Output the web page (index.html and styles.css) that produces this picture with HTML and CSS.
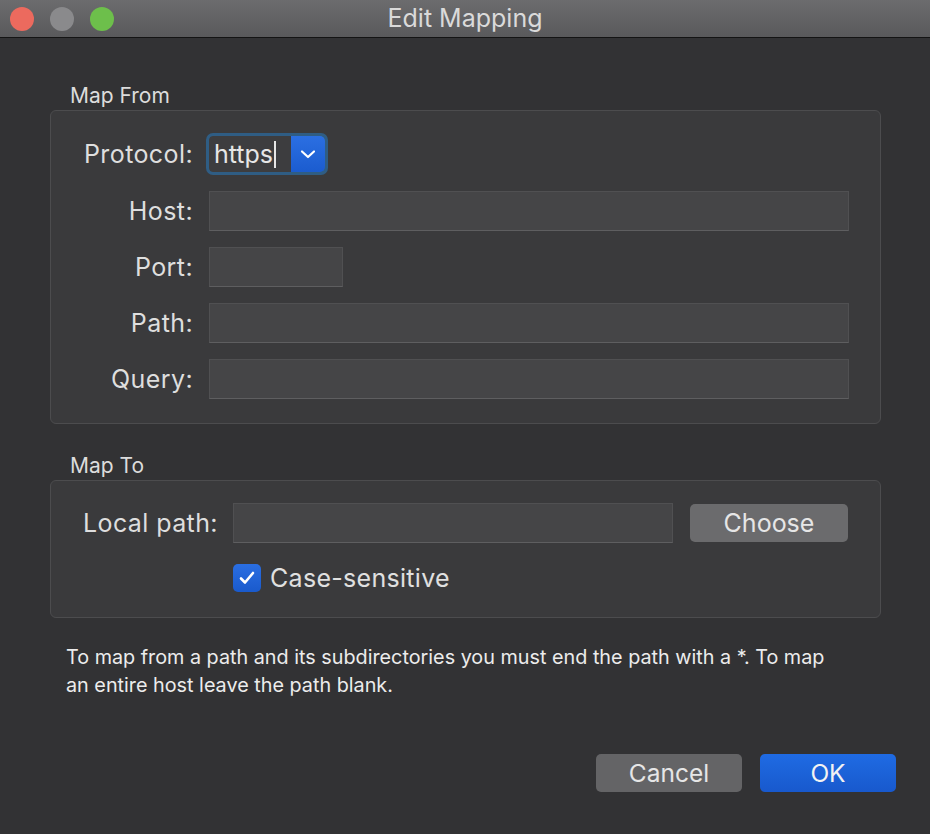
FILE: index.html
```html
<!DOCTYPE html>
<html>
<head>
<meta charset="utf-8">
<link rel="stylesheet" href="styles.css">
</head>
<body>
<div class="window">
  <div class="titlebar">
    <div class="lights">
      <span class="light red"></span>
      <span class="light gray"></span>
      <span class="light green"></span>
    </div>
    <div class="title">Edit Mapping</div>
  </div>
  <div class="content">
    <div class="group-label">Map From</div>
    <div class="group from">
      <div class="row">
        <label class="lbl">Protocol:</label>
        <div class="combo">
          <div class="combo-field">https<span class="caret"></span></div>
          <div class="combo-btn">
            <svg width="16" height="10" viewBox="0 0 16 10"><path d="M2 2.5 L8 8 L14 2.5" fill="none" stroke="#fff" stroke-width="2.2" stroke-linecap="round" stroke-linejoin="round"/></svg>
          </div>
        </div>
      </div>
      <div class="row">
        <label class="lbl">Host:</label>
        <div class="field wide"></div>
      </div>
      <div class="row">
        <label class="lbl">Port:</label>
        <div class="field port"></div>
      </div>
      <div class="row">
        <label class="lbl">Path:</label>
        <div class="field wide"></div>
      </div>
      <div class="row">
        <label class="lbl">Query:</label>
        <div class="field wide"></div>
      </div>
    </div>

    <div class="group-label to-label">Map To</div>
    <div class="group to">
      <div class="row local">
        <label class="lbl2">Local path:</label>
        <div class="field local-field"></div>
        <button class="btn choose">Choose</button>
      </div>
      <div class="check-row">
        <span class="checkbox">
          <svg width="18" height="16" viewBox="0 0 18 16"><path d="M3 8.5 L7 12.5 L15 3" fill="none" stroke="#fff" stroke-width="2.6" stroke-linecap="round" stroke-linejoin="round"/></svg>
        </span>
        <span class="check-text">Case-sensitive</span>
      </div>
    </div>

    <p class="note">To map from a path and its subdirectories you must end the path with a *. To map an entire host leave the path blank.</p>

    <div class="actions">
      <button class="btn cancel">Cancel</button>
      <button class="btn ok">OK</button>
    </div>
  </div>
</div>
</body>
</html>
```
FILE: styles.css
```css
html, body {
  margin: 0;
  padding: 0;
}
body {
  width: 930px;
  height: 834px;
  background: #323234;
  font-family: Inter, "Liberation Sans", Arial, sans-serif;
  color: #dedede;
  overflow: hidden;
}
.window {
  width: 930px;
  height: 834px;
}
.titlebar {
  height: 37px;
  background: linear-gradient(#6c6c6e, #59595b);
  border-bottom: 1px solid #141414;
  display: flex;
  align-items: center;
  position: relative;
}
.lights {
  display: flex;
  gap: 16px;
  padding-left: 10px;
}
.light {
  width: 24px;
  height: 24px;
  border-radius: 50%;
  display: block;
}
.light.red { background: #ec6a5e; }
.light.gray { background: #8a8a8c; }
.light.green { background: #6dbf4b; }
.title {
  position: absolute;
  left: 0;
  right: 0;
  text-align: center;
  font-size: 25px;
  line-height: 30px;
  color: #dadada;
  top: 3px;
}
.content {
  padding: 0 49px 0 50px;
}
.group-label {
  font-size: 21px;
  line-height: 24px;
  padding-left: 20px;
  padding-top: 46px;
  height: 26px;
  color: #dcdcdc;
}
.to-label {
  padding-top: 30px;
}
.group {
  background: #3a3a3c;
  border: 1px solid #4c4c4e;
  border-radius: 6px;
  box-sizing: border-box;
}
.group.from {
  height: 314px;
  padding: 22px 0 0 0;
  display: flex;
  flex-direction: column;
  gap: 16px;
}
.row {
  display: flex;
  align-items: center;
  height: 40px;
}
.group.from .row:first-child {
  height: 42px;
}
.lbl {
  width: 158px;
  text-align: right;
  font-size: 25px;
  letter-spacing: 0.4px;
  padding-right: 16px;
  box-sizing: border-box;
  color: #dedede;
}
.field {
  height: 40px;
  box-sizing: border-box;
  background: #454547;
  border: 1px solid #505052;
  border-bottom: 1px solid #5e5e60;
}
.field.wide {
  width: 640px;
}
.field.port {
  width: 134px;
}
.combo {
  margin-left: -3px;
  height: 42px;
  width: 122px;
  box-sizing: border-box;
  border: 3px solid #2f5d84;
  border-radius: 7px;
  display: flex;
  overflow: hidden;
  background: #2f5d84;
}
.combo-field {
  width: 82px;
  background: #3d3d3f;
  border-radius: 4px 0 0 4px;
  font-size: 25px;
  line-height: 36px;
  padding-left: 5px;
  box-sizing: border-box;
  color: #e6e6e6;
  display: flex;
  align-items: center;
}
.caret {
  display: inline-block;
  width: 1.5px;
  height: 27px;
  background: #e6e6e6;
  margin-left: 1px;
}
.combo-btn {
  flex: 1;
  background: linear-gradient(#2b6fe2, #1b5ccf);
  border-radius: 0 5px 5px 0;
  display: flex;
  align-items: center;
  justify-content: center;
}
.group.to {
  height: 138px;
  padding: 22px 0 0 0;
}
.lbl2 {
  width: 182px;
  padding-left: 32px;
  font-size: 25px;
  letter-spacing: 0.4px;
  box-sizing: border-box;
  color: #dedede;
}
.field.local-field {
  width: 440px;
}
.btn {
  font-family: Inter, "Liberation Sans", Arial, sans-serif;
  border: none;
  border-radius: 5px;
  color: #e6e6e6;
  font-size: 25px;
  padding: 0;
  cursor: default;
}
.choose {
  margin-left: 17px;
  width: 158px;
  height: 38px;
  background: #6b6b6d;
}
.check-row {
  display: flex;
  align-items: center;
  margin-top: 20px;
  padding-left: 182px;
  height: 30px;
}
.checkbox {
  width: 28px;
  height: 28px;
  border-radius: 5px;
  background: linear-gradient(#2a6ee2, #1a5acc);
  display: flex;
  align-items: center;
  justify-content: center;
}
.check-text {
  font-size: 25px;
  letter-spacing: 0.3px;
  margin-left: 9px;
  color: #e0e0e0;
}
.note {
  margin: 25px 0 0 16px;
  width: 778px;
  font-size: 19.8px;
  line-height: 28px;
  color: #ececec;
}
.actions {
  display: flex;
  justify-content: flex-end;
  gap: 18px;
  margin-top: 55px;
  margin-right: -15px;
}
.cancel {
  width: 146px;
  height: 38px;
  background: #646466;
  font-size: 24.5px;
}
.ok {
  width: 136px;
  height: 38px;
  background: linear-gradient(#1f6be3, #1859cd);
  color: #f2f2f2;
  font-size: 24.5px;
}
```
